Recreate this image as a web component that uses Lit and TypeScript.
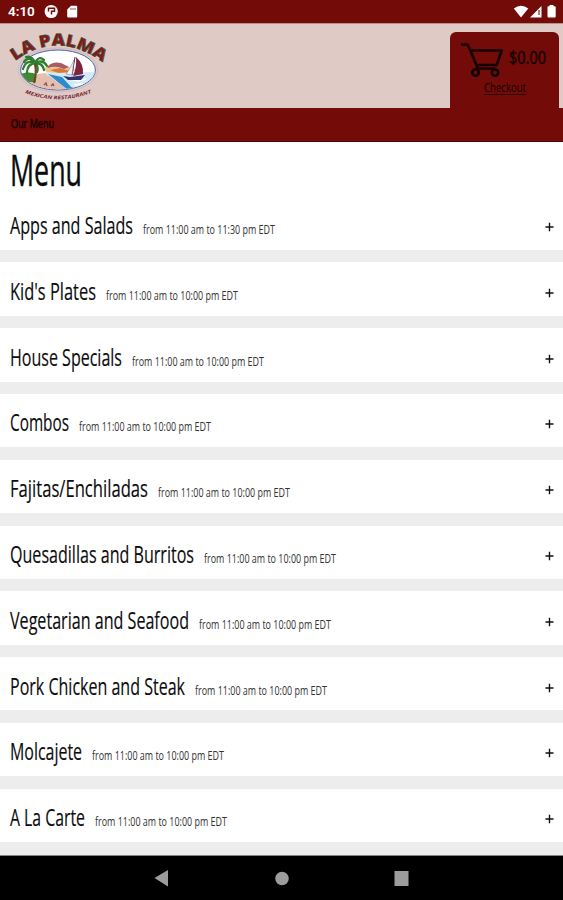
import { LitElement, html, css } from "lit";
import { customElement, property } from "lit/decorators.js";

/** A line of text condensed to a given width. */
@customElement("narrow-text")
class NarrowText extends LitElement {
  @property() text = "";
  @property({ type: Number }) w = 100;
  @property({ type: Number }) size = 16;
  static styles = css`
    :host { display: block; flex: none; }
    .box { overflow: visible; }
    .line { display: inline-block; white-space: nowrap; transform-origin: 0 0; font-family: "Open Sans", "Noto Sans", sans-serif; }
  `;
  render() {
    return html`<div class="box" style="width:${this.w}px;height:${this.size}px"><span class="line" style="font-size:${this.size}px;line-height:${this.size * 1.3}px">${this.text}</span></div>`;
  }
  updated() {
    const line = this.renderRoot.querySelector<HTMLElement>(".line")!;
    line.style.transform = "none";
    line.style.transform = `scaleX(${this.w / line.getBoundingClientRect().width})`;
  }
}

@customElement("palma-logo")
class PalmaLogo extends LitElement {
  static styles = css`
    :host { display: block; }
    svg { display: block; overflow: visible; }
    .name { font: 900 16.5px "Open Sans", sans-serif; fill: #8b1720; stroke: #24572c; stroke-width: 0.6; }
    .sub { font: italic 700 5px "Open Sans", sans-serif; fill: #7a2636; }
  `;
  render() {
    return html`<svg width="100" height="76" viewBox="8 28 100 76">
      <defs>
        <path id="top" d="M15 61 Q57 30 101 61" />
        <path id="bot" d="M25 93 Q58 106 94 92" />
        <clipPath id="oval"><ellipse cx="58" cy="70" rx="37" ry="19.5" /></clipPath>
      </defs>
      <ellipse cx="58" cy="70" rx="40" ry="22" fill="none" stroke="#c9bcc8" stroke-width="1" />
      <ellipse cx="58" cy="70" rx="37.4" ry="20" fill="#fff" stroke="#5060a8" stroke-width="1" />
      <g clip-path="url(#oval)">
        <path d="M44 68q14-7 32 2l-5 3-24 0z" fill="#f2c386" />
        <path d="M48 66q5-5 13-3l8 4-5 2q-8-4-16-1z" fill="#a95a68" />
        <path d="M50 70l10-2 12 4-14 1z" fill="#d8793a" />
        <path d="M20 76l26-3 10 8 14 10H20z" fill="#e4bfae" />
        <path d="M20 74q10-3 16 0v8H20z" fill="#438a35" />
        <path d="M46 72l14 1 36-1-5 9-17 10-10-6-8-7-10-3z" fill="#d4ebf7" />
        <path d="M48 74l14 3 9 10 10 3-10 2-12-9z" fill="#2b8bcf" />
        <path d="M66 78l12 3 8-2M74 85l9-1" fill="none" stroke="#fff" stroke-width="1.6" />
      </g>
      <g fill="none" stroke="#2f7d32" stroke-width="2.3" stroke-linecap="round">
        <path d="M35 63q-6-8-11-1M35 63q-9-4-12 6M35 63q-8 1-8 10M35 63q-3-8-9-6M35 63q4-8 9-3M35 63q8-4 12 3M35 63q8 0 9 7M35 63q4 4 2 9" />
      </g>
      <path d="M35 64q2 9-1 19" fill="none" stroke="#6b4a23" stroke-width="2.2" />
      <path d="M44 85l2-2 1 3M51 86l2-2 1 2" fill="none" stroke="#96505c" stroke-width="1.4" />
      <path d="M63 76l7 1 15-2-4 5H68z" fill="#33346e" />
      <path d="M75 57l-3 18" stroke="#43284a" stroke-width="1" />
      <path d="M76 57q8 7 7 17l-10 2q4-9 3-19z" fill="#7f2340" />
      <path d="M74 60q-4 9-8 14l6 1z" fill="#f5f2f6" stroke="#7a6785" stroke-width=".5" />
      <text class="name"><textPath href="#top" textLength="95" lengthAdjust="spacingAndGlyphs">LA PALMA</textPath></text>
      <text class="sub"><textPath href="#bot" textLength="68" lengthAdjust="spacingAndGlyphs">MEXICAN RESTAURANT</textPath></text>
    </svg>`;
  }
}

const menu: [string, number, number, string][] = [
  ["Apps and Salads", 123, 10, "11:30"],
  ["Kid's Plates", 86, 9.5, "10:00"],
  ["House Specials", 112, 10, "10:00"],
  ["Combos", 59, 10, "10:00"],
  ["Fajitas/Enchiladas", 138, 10, "10:00"],
  ["Quesadillas and Burritos", 184, 10, "10:00"],
  ["Vegetarian and Seafood", 179, 9.5, "10:00"],
  ["Pork Chicken and Steak", 175, 10, "10:00"],
  ["Molcajete", 72, 9.5, "10:00"],
  ["A La Carte", 75, 10, "10:00"],
];

@customElement("app-root")
class AppRoot extends LitElement {
  static styles = css`
    :host { display: flex; flex-direction: column; width: 563px; height: 900px; overflow: hidden; background: #ededed; color: #0c0c0c; }
    .status { flex: none; height: 23px; box-sizing: border-box; background: #730b08; display: flex; align-items: center; padding: 0 6px 0 8px; }
    .status svg { display: block; }
    .time { font: 600 13.5px/23px Roboto, sans-serif; color: #fff; width: 36px; }
    .spacer { flex: 1; }
    .header { flex: none; height: 85px; box-sizing: border-box; background: #dfcac5; border-top: 1px solid #b98f89; display: flex; justify-content: space-between; padding: 4px 4px 0 8px; }
    .cart { margin-top: 4px; width: 109px; height: 76px; box-sizing: border-box; border-radius: 6px 6px 0 0; background: #730b08; color: #160202; padding: 10px 0 0 11px; }
    .total { display: flex; gap: 6px; }
    .price { padding-top: 4px; -webkit-text-stroke: 0.5px; }
    .checkout { display: block; width: 42px; margin: 0 0 0 23px; border-bottom: 1px solid #2a0302; padding-bottom: 3px; }
    .nav { flex: none; height: 34px; box-sizing: border-box; background: #730b08; border-bottom: 1px solid #510604; color: #160202; padding: 6px 11px; }
    .nav narrow-text { -webkit-text-stroke: 0.5px; }
    .title { flex: none; height: 54.3px; box-sizing: border-box; background: #fff; padding: 0 10px; }
    .title narrow-text { -webkit-text-stroke: 0.4px; }
    .row { flex: none; height: 53.4px; margin-bottom: 12.4px; box-sizing: border-box; background: #fff; display: flex; padding: 12.5px 9px 0 10px; }
    .name { -webkit-text-stroke: 0.15px; }
    .hours { color: #333; padding-top: 11px; }
    .plus { margin: 13px 0 0 auto; display: block; }
    .keys { height: 45px; flex: none; margin-top: auto; box-sizing: border-box; border-top: 1px solid #7f8582; background: #000; display: flex; align-items: center; justify-content: center; }
    .list { flex: 1; min-height: 0; overflow: hidden; display: flex; flex-direction: column; }
    .first { height: 53.7px; }
  `;
  render() {
    return html`
      <div class="status">
        <span class="time">4:10</span>
        <svg width="36" height="15" viewBox="0 0 36 15">
          <circle cx="7.2" cy="7.5" r="6.6" fill="#fff" />
          <path d="M4.500 7.500V4.200H10.500V7.300H7.500V10.500" fill="none" stroke="#730b08" stroke-width="1.5" />
          <path d="M27 1.8h5.2a1 1 0 0 1 1 1v9.8a1 1 0 0 1-1 1h-8a1 1 0 0 1-1-1V5.5z" fill="#fff" />
          <path d="M27 4v2M29 4v2M31 4v2" stroke="#730b08" stroke-width=".7" />
        </svg>
        <span class="spacer"></span>
        <svg width="44" height="15" viewBox="0 0 44 15">
          <path d="M.8 4.5Q8 -.8 15.3 4.5L8 13.5z" fill="#fff" />
          <path d="M17 13.5L28.5 2v11.5z" fill="#fff" />
          <path d="M26 6v5" stroke="#730b08" stroke-width="1.1" />
          <path d="M36.5 1h4v1.3h1.2a1 1 0 0 1 1 1v9.2a1 1 0 0 1-1 1h-6.2a1 1 0 0 1-1-1V3.300a1 1 0 0 1 1-1h1z" fill="#fff" />
        </svg>
      </div>
      <div class="header">
        <palma-logo></palma-logo>
        <div class="cart">
          <div class="total">
            <svg width="42" height="36" viewBox="0 0 42 36" fill="none" stroke="#160202" stroke-width="2.7" stroke-linejoin="round">
              <path d="M0 2.500h6.500l3.200 6.500 7 17.500h17.500M9.700 8.500h31l-5 14.500H16" />
              <circle cx="14.500" cy="30.500" r="3.200" />
              <circle cx="34" cy="30.500" r="3.200" />
            </svg>
            <narrow-text class="price" text="$0.00" .w=${37} .size=${17.5}></narrow-text>
          </div>
          <div class="checkout"><narrow-text text="Checkout" .w=${42} .size=${13}></narrow-text></div>
        </div>
      </div>
      <div class="nav"><narrow-text text="Our Menu" .w=${43} .size=${12}></narrow-text></div>
      <div class="title"><narrow-text text="Menu" .w=${72} .size=${43}></narrow-text></div>
      <div class="list">
        ${menu.map(([name, w, gap, end], i) => html`
          <div class="row ${i === 0 ? "first" : ""}">
            <narrow-text class="name" .text=${name} .w=${w} .size=${24}></narrow-text>
            <narrow-text class="hours" style="margin-left:${gap}px" .text=${`from 11:00 am to ${end} pm EDT`} .w=${132} .size=${13}></narrow-text>
            <svg class="plus" width="9" height="10" viewBox="0 0 9 10"><path d="M.5 5h8M4.500 .8v8.400" stroke="#111" stroke-width="1.400" /></svg>
          </div>`)}
      </div>
      <div class="keys">
        <svg width="260" height="20" viewBox="152 868 260 20" fill="#9c9c9c">
          <path d="M154.500 878l13.500-8v16.500z" />
          <circle cx="282" cy="878.500" r="6.800" />
          <rect x="394.500" y="871" width="14" height="15" />
        </svg>
      </div>`;
  }
}
